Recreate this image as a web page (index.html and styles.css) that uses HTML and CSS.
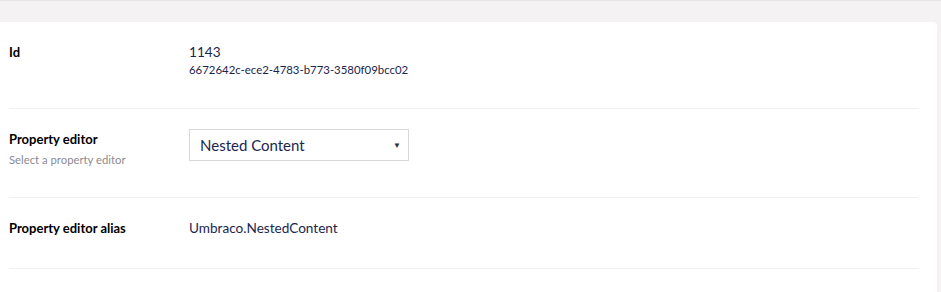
FILE: index.html
```html
<!DOCTYPE html>
<html>
<head>
    <meta charset="utf-8">
    <title>Data type</title>

    <link rel="stylesheet" href="styles.css">
</head>
<body>
    <div class="editor">
        <div class="panel">
            <div class="property">
                <div class="property-label">Id</div>
                <div class="property-value">
                    <div class="id-number">1143</div>
                    <div class="id-key">6672642c-ece2-4783-b773-3580f09bcc02</div>
                </div>
            </div>

            <div class="property">
                <div class="property-label">
                    Property editor
                    <small>Select a property editor</small>
                </div>
                <div class="property-value">
                    <div class="select-box">
                        <span>Nested Content</span>
                        <span class="caret">&#9660;</span>
                    </div>
                </div>
            </div>

            <div class="property">
                <div class="property-label">Property editor alias</div>
                <div class="property-value">Umbraco.NestedContent</div>
            </div>
        </div>
    </div>
</body>
</html>
```

FILE: styles.css
```css
html, body {
    margin: 0;
    height: 100%;
}

body {
    background: #f4f2f3;
    border-top: 1px solid #e6e4e6;
    box-sizing: border-box;
    font-family: Lato, "Open Sans", sans-serif;
    color: #1b264f;
}

.editor {
    padding: 21px 4px 0 0;
}

.panel {
    background: #fff;
    border-top-right-radius: 4px;
    padding: 0 19px 0 9px;
    min-height: 280px;
}

.property {
    display: grid;
    grid-template-columns: 180px 1fr;
    padding: 20px 0 30px;
    border-bottom: 1px solid #f0eff1;
}

.property-label {
    font-size: 13px;
    font-weight: bold;
    line-height: 20px;
    color: #000;
}

.property-label small {
    display: block;
    margin-top: 4px;
    font-size: 11.3px;
    line-height: 14px;
    font-weight: normal;
    color: #8c8b90;
}

.property-value {
    font-size: 13.6px;
    line-height: 20px;
}

.id-key {
    font-size: 11.4px;
    line-height: 16px;
}

.select-box {
    box-sizing: border-box;
    display: flex;
    justify-content: space-between;
    align-items: center;
    width: 220px;
    height: 32px;
    padding: 0 7px 0 10px;
    border: 1px solid #d8d7d9;
    font-size: 15px;
}

.caret {
    font-size: 8px;
    color: #303033;
}
```
